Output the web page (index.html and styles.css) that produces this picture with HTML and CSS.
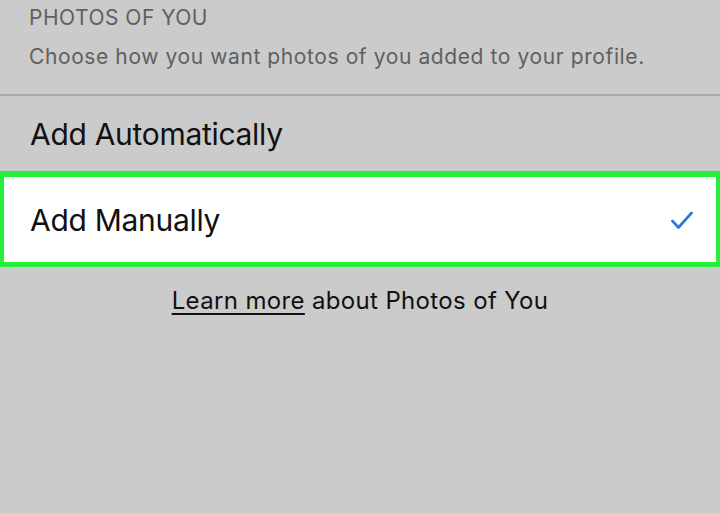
FILE: index.html
```html
<!DOCTYPE html>
<html lang="en">
<head>
    <meta charset="UTF-8">
    <meta name="viewport" content="width=device-width, initial-scale=1.0">
    <title>Photos of You</title>
    <link rel="stylesheet" href="styles.css">
</head>
<body>
    <!-- Section header -->
    <div class="section-header">
        <div class="section-title">PHOTOS OF YOU</div>
        <div class="section-desc">Choose how you want photos of you added to your profile.</div>
    </div>

    <!-- Options list -->
    <div class="options">
        <div class="option">Add Automatically</div>
        <div class="option selected">
            <span>Add Manually</span>
            <svg class="check" width="22" height="19" viewBox="0 0 22 19">
                <path d="M1.5 10 L7.5 16.5 L20.5 2" fill="none" stroke="#2b7bd4" stroke-width="2.7" stroke-linecap="round" stroke-linejoin="round"/>
            </svg>
        </div>
    </div>

    <div class="footer-note"><a href="#" class="link">Learn more</a> about Photos of You</div>
</body>
</html>
```

FILE: styles.css
```css
body {
    margin: 0;
    background-color: #cbcbcb;
    font-family: Inter, "Noto Sans", sans-serif;
    color: #111;
}
.section-header {
    padding: 5px 29px 0;
    height: 96px;
    box-sizing: border-box;
    border-bottom: 2px solid #a9a9a9;
}
.section-title {
    font-size: 21px;
    line-height: 26px;
    color: #606060;
    letter-spacing: 0.5px;
}
.section-desc {
    margin-top: 13px;
    font-size: 21px;
    line-height: 26px;
    color: #606060;
    letter-spacing: 0.6px;
}
.option {
    display: flex;
    align-items: center;
    justify-content: space-between;
    height: 75px;
    padding: 0 26px 0 30px;
    font-size: 30px;
    letter-spacing: -0.3px;
}
.option.selected {
    height: 96px;
    background-color: #fff;
    border-style: solid;
    border-color: #22f03a;
    border-width: 6px 4px 5px 4px;
    box-sizing: border-box;
    padding: 0 23px 0 26px;
}
.check {
    display: block;
    margin-top: 2px;
}
.footer-note {
    margin-top: 19px;
    text-align: center;
    font-size: 24px;
    line-height: 30px;
    letter-spacing: 0.35px;
}
.link {
    color: #111;
    text-decoration: underline;
    text-underline-offset: 4px;
}
```
